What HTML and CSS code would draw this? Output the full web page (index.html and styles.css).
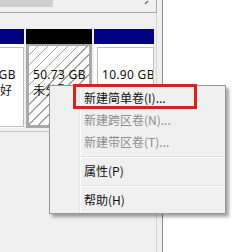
FILE: index.html
```html
<!DOCTYPE html>
<html lang="zh-CN">
<head>
<meta charset="utf-8">
<link rel="stylesheet" href="styles.css">
</head>
<body>
<div class="screen">
  <div class="window">
    <div class="pane">
      <div class="scrollbar">
        <div class="thumb"></div>
        <svg class="arrow" width="6" height="5" viewBox="0 0 6 5"><path d="M1 4 L4 1" stroke="#6a6a6a" stroke-width="1.2" fill="none"/></svg>
      </div>
      <div class="disk">
        <div class="part p1">
          <div class="hdr blue"></div>
          <div class="body">
            <div class="box"><div class="txt lead">39.06 GB<br>状态良好</div></div>
          </div>
        </div>
        <div class="part p2">
          <div class="hdr black"></div>
          <div class="body sel">
            <div class="hatch"><div class="txt">50.73 GB<br>未分配</div></div>
          </div>
        </div>
        <div class="part p3">
          <div class="hdr blue"></div>
          <div class="body">
            <div class="box"><div class="txt">10.90 GB<br>状态良好</div></div>
          </div>
        </div>
      </div>
      <div class="rule"></div>
    </div>
  </div>
  <div class="desk"></div>
  <div class="menu">
    <div class="mark"></div>
    <div class="item">新建简单卷(I)...</div>
    <div class="item off">新建跨区卷(N)...</div>
    <div class="item off">新建带区卷(T)...</div>
    <div class="sep"></div>
    <div class="item">属性(P)</div>
    <div class="sep"></div>
    <div class="item">帮助(H)</div>
  </div>
</div>
</body>
</html>
```
FILE: styles.css
```css
html, body {
  margin: 0;
  padding: 0;
  background: #ffffff;
}
.screen {
  position: relative;
  display: flex;
  width: 249px;
  height: 252px;
  overflow: hidden;
  font-family: "Noto Sans", "Noto Sans CJK SC", sans-serif;
  font-size: 12px;
}
.window {
  width: 162px;
  height: 252px;
  background: #f0f0f0;
  border-right: 1px solid #8a8a8a;
  flex: none;
}
.pane {
  width: 157px;
  height: 252px;
  border-right: 1px solid #d6d6d6;
  box-sizing: border-box;
}
.scrollbar {
  display: flex;
  justify-content: space-between;
  align-items: flex-start;
  width: 157px;
  height: 13px;
  box-sizing: border-box;
  border-bottom: 1px solid #a9a9a9;
  border-right: 1px solid #a9a9a9;
}
.thumb {
  width: 53px;
  height: 7px;
  background: #cfcfcf;
}
.arrow {
  margin-right: 6px;
}
.disk {
  display: flex;
  margin-top: 16px;
  gap: 2px;
}
.part {
  display: flex;
  flex-direction: column;
  flex: none;
}
.p1 { width: 24px; }
.p2 { width: 66px; }
.p3 { width: 60px; }
.hdr {
  height: 15px;
}
.blue { background: #000080; }
.black { background: #000000; }
.body {
  height: 84px;
  background: #ffffff;
  padding: 3px 0 1px 3px;
  box-sizing: border-box;
  display: flex;
}
.p1 .body {
  padding-left: 0;
}
.box {
  flex: 1;
  border: 1px solid #bdbdbd;
  background: #ffffff;
  overflow: hidden;
}
.p1 .box {
  border-left: none;
}
.body.sel {
  background: #a9a9a9;
  padding: 2px 3px 3px 3px;
}
.hatch {
  flex: 1;
  overflow: hidden;
  background: repeating-linear-gradient(135deg, #ffffff 0 6px, #a3a3a3 6px 7px);
}
.txt {
  white-space: nowrap;
  line-height: 16px;
  color: #111111;
  letter-spacing: 0.3px;
  padding: 19px 0 0 4px;
}
.hatch .txt {
  padding-top: 21px;
}
.txt.lead {
  padding-left: 0;
  margin-left: -37px;
}
.rule {
  margin-top: 3px;
  border-top: 1px solid #c6c6c6;
}
.desk {
  flex: 1;
  background: #ffffff;
}
.menu {
  position: absolute;
  left: 49px;
  top: 85px;
  width: 177px;
  box-sizing: border-box;
  border: 1px solid #979797;
  padding: 1px 1px 2px 1px;
  background-color: #f0f0f0;
  background-image: linear-gradient(to right, transparent 29px, #e2e3e3 29px, #e2e3e3 30px, #ffffff 30px, #ffffff 31px, transparent 31px);
  box-shadow: 3px 3px 3px rgba(0, 0, 0, 0.35);
  font-family: "Noto Sans CJK SC", sans-serif;
}
.item {
  height: 22px;
  line-height: 22px;
  padding-left: 33px;
  color: #101010;
  white-space: nowrap;
}
.item.off {
  color: #8d8d8d;
}
.sep {
  height: 7px;
  margin-left: 29px;
  display: flex;
  flex-direction: column;
  justify-content: center;
}
.sep::before {
  content: "";
  display: block;
  height: 1px;
  background: #e0e0e0;
  border-bottom: 1px solid #ffffff;
}
.mark {
  position: absolute;
  left: 23px;
  top: -2px;
  width: 124px;
  height: 25px;
  box-sizing: border-box;
  border: 3px solid #d7231e;
}
```
